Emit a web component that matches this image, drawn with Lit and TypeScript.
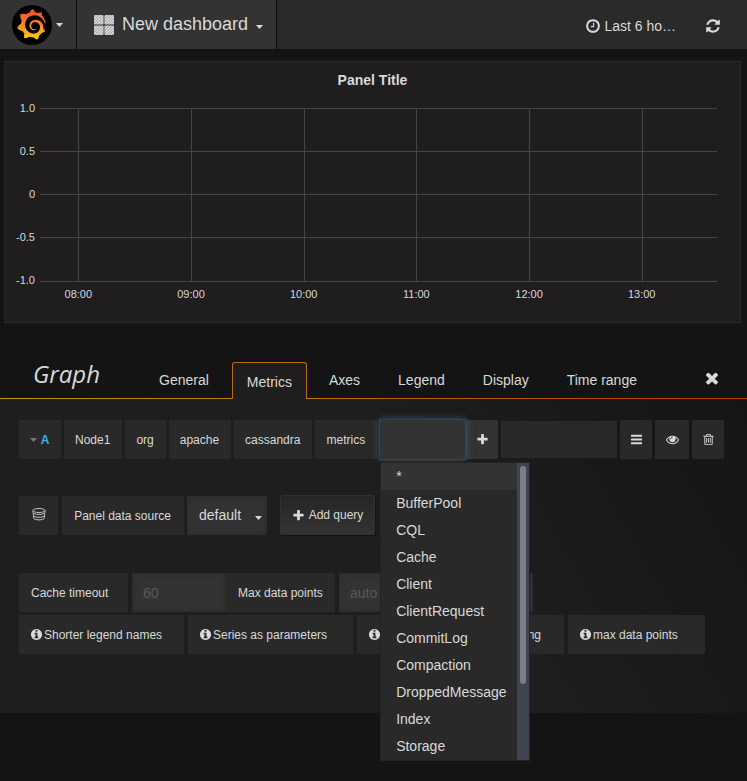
import { LitElement, html, css, svg } from "lit";
import { customElement, state } from "lit/decorators.js";
import { classMap } from "lit/directives/class-map.js";

const ICONS: Record<string, string> = {
  plus: "M1600 736v192q0 40-28 68t-68 28h-416v416q0 40-28 68t-68 28h-192q-40 0-68-28t-28-68v-416h-416q-40 0-68-28t-28-68v-192q0-40 28-68t68-28h416v-416q0-40 28-68t68-28h192q40 0 68 28t28 68v416h416q40 0 68 28t28 68z",
  bars: "M1664 1344v128q0 26-19 45t-45 19h-1408q-26 0-45-19t-19-45v-128q0-26 19-45t45-19h1408q26 0 45 19t19 45zm0-512v128q0 26-19 45t-45 19h-1408q-26 0-45-19t-19-45v-128q0-26 19-45t45-19h1408q26 0 45 19t19 45zm0-512v128q0 26-19 45t-45 19h-1408q-26 0-45-19t-19-45v-128q0-26 19-45t45-19h1408q26 0 45 19t19 45z",
  eye: "M1664 960q-152-236-381-353 61 104 61 225 0 185-131.5 316.5t-316.5 131.5-316.5-131.5-131.5-316.5q0-121 61-225-229 117-381 353 133 205 333.5 326.5t434.5 121.5 434.5-121.5 333.5-326.5zm-720-384q0-20-14-34t-34-14q-125 0-214.5 89.5t-89.5 214.5q0 20 14 34t34 14 34-14 14-34q0-86 61-147t147-61q20 0 34-14t14-34zm848 384q0 34-20 69-140 230-376.5 368.5t-499.5 138.5-499.5-139-376.5-368q-20-35-20-69t20-69q140-229 376.5-368t499.5-139 499.5 139 376.5 368q20 35 20 69z",
  trash: "M704 736v576q0 14-9 23t-23 9h-64q-14 0-23-9t-9-23v-576q0-14 9-23t23-9h64q14 0 23 9t9 23zm256 0v576q0 14-9 23t-23 9h-64q-14 0-23-9t-9-23v-576q0-14 9-23t23-9h64q14 0 23 9t9 23zm256 0v576q0 14-9 23t-23 9h-64q-14 0-23-9t-9-23v-576q0-14 9-23t23-9h64q14 0 23 9t9 23zm128 724v-948h-896v948q0 22 7 40.5t14.5 27 10.5 8.5h832q3 0 10.5-8.5t14.5-27 7-40.5zm-672-1076h448l-48-117q-7-9-17-11h-317q-10 2-17 11zm928 32v64q0 14-9 23t-23 9h-96v948q0 83-47 143.5t-113 60.5h-832q-66 0-113-58.5t-47-141.5v-952h-96q-14 0-23-9t-9-23v-64q0-14 9-23t23-9h309l70-167q15-37 54-63t79-26h320q40 0 79 26t54 63l70 167h309q14 0 23 9t9 23z",
  times: "M1490 1322q0 40-28 68l-136 136q-28 28-68 28t-68-28l-294-294-294 294q-28 28-68 28t-68-28l-136-136q-28-28-28-68t28-68l294-294-294-294q-28-28-28-68t28-68l136-136q28-28 68-28t68 28l294 294 294-294q28-28 68-28t68 28l136 136q28 28 28 68t-28 68l-294 294 294 294q28 28 28 68z",
  clock: "M1024 544v448q0 14-9 23t-23 9h-320q-14 0-23-9t-9-23v-64q0-14 9-23t23-9h224v-352q0-14 9-23t23-9h64q14 0 23 9t9 23zm416 352q0-148-73-273t-198-198-273-73-273 73-198 198-73 273 73 273 198 198 273 73 273-73 198-198 73-273zm224 0q0 209-103 385.5t-279.5 279.5-385.5 103-385.5-103-279.5-279.5-103-385.5 103-385.5 279.5-279.5 385.5-103 385.5 103 279.5 279.5 103 385.5z",
  refresh: "M1639 1056q0 5-1 7-64 268-268 434.5t-478 166.5q-146 0-282.5-55t-243.5-157l-129 129q-19 19-45 19t-45-19-19-45v-448q0-26 19-45t45-19h448q26 0 45 19t19 45-19 45l-137 137q71 66 161 102t187 36q134 0 250-65t186-179q11-17 53-117 8-23 30-23h192q13 0 22.5 9.5t9.5 22.5zm25-800v448q0 26-19 45t-45 19h-448q-26 0-45-19t-19-45 19-45l138-138q-148-137-349-137-134 0-250 65t-186 179q-11 17-53 117-8 23-30 23h-199q-13 0-22.5-9.5t-9.5-22.5v-7q65-268 270-434.5t480-166.5q146 0 284 55.5t245 156.5l130-129q19-19 45-19t45 19 19 45z",
  info: "M1152 1376v-160q0-14-9-23t-23-9h-96v-512q0-14-9-23t-23-9h-320q-14 0-23 9t-9 23v160q0 14 9 23t23 9h96v320h-96q-14 0-23 9t-9 23v160q0 14 9 23t23 9h448q14 0 23-9t9-23zm-128-896v-160q0-14-9-23t-23-9h-192q-14 0-23 9t-9 23v160q0 14 9 23t23 9h192q14 0 23-9t9-23zm640 416q0 209-103 385.5t-279.5 279.5-385.5 103-385.5-103-279.5-279.5-103-385.5 103-385.5 279.5-279.5 385.5-103 385.5 103 279.5 279.5 103 385.5z",
};

const icon = (name: string, size = 14) =>
  html`<svg class="icon" width=${size} height=${size} viewBox="0 0 1792 1792" aria-hidden="true"><path d=${ICONS[name]}></path></svg>`;

const caret = html`<svg class="icon caret" width="7" height="4" viewBox="0 0 7 4" aria-hidden="true"><path d="M0 0h7L3.500 4z"></path></svg>`;

const LOGO =
  "M23.02 10.59a8.578 8.578 0 0 0-.862-3.034 8.911 8.911 0 0 0-1.789-2.445c.337-1.342-.413-2.505-.413-2.505-1.292-.08-2.113.4-2.416.62-.052-.02-.102-.044-.154-.064-.22-.089-.446-.172-.677-.247-.231-.073-.47-.14-.711-.197a9.867 9.867 0 0 0-.875-.161C14.557.753 12.94 0 12.94 0c-1.804 1.145-2.147 2.744-2.147 2.744l-.018.093c-.098.029-.2.057-.298.088-.138.042-.275.094-.413.143-.138.055-.275.107-.41.166a8.869 8.869 0 0 0-1.557.87l-.063-.029c-2.497-.955-4.716.195-4.716.195-.203 2.658.996 4.33 1.235 4.636a11.608 11.608 0 0 0-.607 2.635C1.636 12.677.953 15.014.953 15.014c1.926 2.214 4.171 2.351 4.171 2.351.003-.002.006-.002.006-.005.285.509.615.994.986 1.446.156.19.32.371.488.548-.704 2.009.099 3.68.099 3.68 2.144.08 3.553-.937 3.849-1.173a9.784 9.784 0 0 0 3.164.501h.08l.055-.003.107-.002.103-.005.003.002c1.01 1.44 2.788 1.646 2.788 1.646 1.264-1.332 1.337-2.653 1.337-2.94v-.058c0-.02-.003-.039-.003-.06.265-.187.52-.387.758-.6a7.875 7.875 0 0 0 1.415-1.7c1.43.083 2.437-.885 2.437-.885-.236-1.49-1.085-2.216-1.264-2.354l-.018-.013-.016-.013a.217.217 0 0 1-.031-.02c.008-.092.016-.18.02-.27.011-.162.016-.323.016-.48v-.253l-.005-.098-.008-.135a1.891 1.891 0 0 0-.01-.13c-.003-.042-.008-.083-.013-.125l-.016-.124-.018-.122a6.215 6.215 0 0 0-2.032-3.73 6.015 6.015 0 0 0-3.222-1.46 6.292 6.292 0 0 0-.85-.048l-.107.002h-.063l-.044.003-.104.008a4.777 4.777 0 0 0-3.335 1.695c-.332.4-.592.84-.768 1.297a4.594 4.594 0 0 0-.312 1.817l.003.091c.005.055.007.11.013.164a3.615 3.615 0 0 0 .698 1.82 3.53 3.53 0 0 0 1.827 1.282c.33.098.66.14.971.137.039 0 .078 0 .114-.002l.063-.003c.02 0 .041-.003.062-.003.034-.002.065-.007.099-.01.007 0 .018-.003.028-.003l.031-.005.06-.008a1.18 1.18 0 0 0 .112-.02c.036-.008.072-.013.109-.024a2.634 2.634 0 0 0 .914-.415c.028-.02.056-.041.085-.065a.248.248 0 0 0 .039-.35.244.244 0 0 0-.309-.06l-.078.042c-.09.044-.184.083-.283.116a2.476 2.476 0 0 1-.475.096c-.028.003-.054.006-.083.006l-.083.002c-.026 0-.054 0-.08-.002l-.102-.006h-.012l-.024.006c-.016-.003-.031-.003-.044-.006-.031-.002-.06-.007-.091-.01a2.59 2.59 0 0 1-.724-.213 2.557 2.557 0 0 1-.667-.438 2.52 2.52 0 0 1-.805-1.475 2.306 2.306 0 0 1-.029-.444l.006-.122v-.023l.002-.031c.003-.021.003-.04.005-.06a3.163 3.163 0 0 1 1.352-2.29 3.12 3.12 0 0 1 .937-.43 2.946 2.946 0 0 1 .776-.101h.06l.07.002.045.003h.026l.07.005a4.041 4.041 0 0 1 1.635.49 3.94 3.94 0 0 1 1.602 1.662 3.77 3.77 0 0 1 .397 1.414l.005.076.003.075c.002.026.002.05.002.075 0 .024.003.052 0 .07v.065l-.002.073-.008.174a6.195 6.195 0 0 1-.08.639 5.1 5.1 0 0 1-.267.927 5.31 5.31 0 0 1-.624 1.13 5.052 5.052 0 0 1-3.237 2.014 4.82 4.82 0 0 1-.649.066l-.039.003h-.287a6.607 6.607 0 0 1-1.716-.265 6.776 6.776 0 0 1-3.4-2.274 6.75 6.75 0 0 1-.746-1.15 6.616 6.616 0 0 1-.714-2.596l-.005-.083-.002-.02v-.056l-.003-.073v-.096l-.003-.104v-.07l.003-.163c.008-.22.026-.45.054-.678a8.707 8.707 0 0 1 .28-1.355c.128-.444.286-.872.473-1.277a7.04 7.04 0 0 1 1.456-2.1 5.925 5.925 0 0 1 .953-.763c.169-.111.343-.213.524-.306.089-.05.182-.091.273-.135.047-.02.093-.042.138-.062a7.177 7.177 0 0 1 .714-.267l.145-.045c.049-.015.098-.026.148-.041.098-.029.197-.052.296-.076.049-.013.1-.02.15-.033l.15-.032.151-.028.076-.013.075-.01.153-.024c.057-.01.114-.013.171-.023l.169-.021c.036-.003.073-.008.106-.01l.073-.008.036-.003.042-.002c.057-.003.114-.008.171-.01l.086-.006h.023l.037-.003.145-.007a7.999 7.999 0 0 1 1.708.125 7.917 7.917 0 0 1 2.048.68 8.253 8.253 0 0 1 1.672 1.09l.09.077.089.078c.06.052.114.107.171.159.057.052.112.106.166.16.052.055.107.107.159.164a8.671 8.671 0 0 1 1.41 1.978c.012.026.028.052.04.078l.04.078.075.156c.023.051.05.1.07.153l.065.15a8.848 8.848 0 0 1 .45 1.34.19.19 0 0 0 .201.142.186.186 0 0 0 .172-.184c.01-.246.002-.532-.024-.856z";

const base = css`
  *, *::before, *::after { box-sizing: border-box; }
  button, input, select { font: inherit; color: inherit; border: 0; margin: 0; border-radius: 0; }
  button { background: none; padding: 0; cursor: pointer; }
  a { color: inherit; text-decoration: none; }
  .icon { display: block; flex: none; fill: currentColor; }
`;

@customElement("top-nav")
class TopNav extends LitElement {
  static styles = [base, css`
    :host { display: block; }
    .bar { display: flex; height: 49px; background: #2a2a2a; }
    .brand, .dash { display: flex; align-items: center; background: #333; border-right: 1px solid #0a0a0a; }
    .brand { padding: 0 14px 0 12px; gap: 4px; width: 77px; }
    .dash { padding: 0 13px 0 17px; gap: 8px; font-size: 18px; }
    .dash .caret { margin-top: 5px; }
    .spacer { flex: 1; }
    .time { display: flex; align-items: center; gap: 3px; margin-right: 29px; font-size: 14px; padding-top: 2px; }
    .refresh { padding-top: 2px; margin-right: 26px; }
  `];
  render() {
    return html`
      <nav class="bar">
        <button class="brand" aria-label="Main menu">
          <svg class="icon" width="40" height="40" viewBox="0 0 40 40" aria-hidden="true">
            <defs>
              <linearGradient id="sun" x1="0" y1="0" x2="0" y2="1">
                <stop offset="0.1" stop-color="#f0532b"></stop>
                <stop offset="0.55" stop-color="#f68a26"></stop>
                <stop offset="1" stop-color="#fcd010"></stop>
              </linearGradient>
            </defs>
            <circle cx="20" cy="20" r="20" fill="#000"></circle>
            <g transform="translate(4 4) scale(1.270)"><path fill="url(#sun)" d=${LOGO}></path></g>
          </svg>
          ${caret}
        </button>
        <button class="dash">
          <svg class="icon" width="20" height="20" viewBox="0 0 20 20" aria-hidden="true">
            <defs>
              <pattern id="hatch" width="2.121" height="2.121" patternUnits="userSpaceOnUse" patternTransform="rotate(45)">
                <rect width="2.121" height="2.121" fill="#8c8c8c"></rect>
                <rect width="1.250" height="2.121" fill="#eee"></rect>
              </pattern>
            </defs>
            ${[[0, 0], [10.4, 0], [0, 10.4], [10.4, 10.4]].map(([x, y]) => svg`<rect x=${x} y=${y} width="9.600" height="9.600" rx="1.200" fill="url(#hatch)"></rect>`)}
          </svg>
          <span>New dashboard</span>
          ${caret}
        </button>
        <span class="spacer"></span>
        <button class="time">${icon("clock", 16)}<span>Last 6 ho…</span></button>
        <button class="refresh" aria-label="Refresh">${icon("refresh", 16)}</button>
      </nav>
    `;
  }
}

@customElement("graph-panel")
class GraphPanel extends LitElement {
  private hours = ["08:00", "09:00", "10:00", "11:00", "12:00", "13:00"];
  private levels = ["1.0", "0.5", "0", "-0.5", "-1.0"];
  static styles = [base, css`
    :host { display: block; }
    .panel { background: #1f1d1e; border: 1px solid #292929; padding: 8px 23px 21px 0; }
    h2 { margin: 0 0 11px; padding-left: 23px; font-size: 14px; line-height: 20px; text-align: center; }
    .chart { display: grid; grid-template-columns: 30px 1fr; column-gap: 5px; font-size: 11px; line-height: 14px; }
    .levels { display: flex; flex-direction: column; justify-content: space-between; text-align: right; }
    .plot { padding: 7px 0 5px; }
    .grid { display: block; width: 100%; height: 174px; }
    .grid line { stroke: #474647; shape-rendering: crispEdges; }
    .hours { grid-column: 2; display: grid; grid-template-columns: repeat(6, 113fr) 19fr; margin-left: -18px; text-align: center; }
  `];
  render() {
    return html`
      <section class="panel">
        <h2>Panel Title</h2>
        <div class="chart">
          <div class="levels">${this.levels.map((l) => html`<span>${l}</span>`)}</div>
          <div class="plot">
            <svg class="grid" aria-hidden="true">
              ${this.hours.map((_, i) => {
                const x = `${((38.5 + i * 112.8) / 677) * 100}%`;
                return svg`<line x1=${x} x2=${x} y1="0" y2="100%"></line>`;
              })}
              ${this.levels.map((_, i) => {
                const y = Math.floor(i * 43.25) + 0.5;
                return svg`<line x1="0" x2="100%" y1=${y} y2=${y}></line>`;
              })}
            </svg>
          </div>
          <div class="hours">${this.hours.map((h) => html`<span>${h}</span>`)}</div>
        </div>
      </section>
    `;
  }
}

@customElement("metric-menu")
class MetricMenu extends LitElement {
  private options = ["*", "BufferPool", "CQL", "Cache", "Client", "ClientRequest", "CommitLog", "Compaction", "DroppedMessage", "Index", "Storage"];
  static styles = [base, css`
    :host { display: block; }
    .menu { display: flex; background: #292929; border: 1px solid #242424; font-size: 14px; line-height: 27px; }
    ul { list-style: none; margin: 0; padding: 0; flex: 1; }
    li { padding: 0 7px 0 15px; white-space: nowrap; }
    .active { background: #333; }
    .track { width: 12px; padding: 3px; background: #404350; }
    .thumb { height: 218px; border-radius: 3px; background: #7b7d88; }
  `];
  render() {
    return html`
      <div class="menu">
        <ul role="listbox" aria-label="Metric">
          ${this.options.map((o, i) => html`<li role="option" aria-selected=${i === 0} class=${classMap({ active: i === 0 })}>${o}</li>`)}
        </ul>
        <div class="track"><div class="thumb"></div></div>
      </div>
    `;
  }
}

@customElement("panel-editor")
class PanelEditor extends LitElement {
  @state() private tab = "Metrics";
  private tabs = ["General", "Metrics", "Axes", "Legend", "Display", "Time range"];
  private path = ["Node1", "org", "apache", "cassandra", "metrics"];
  static styles = [base, css`
    :host { display: block; }
    .head { display: flex; align-items: flex-end; height: 40px; padding: 0 26px 0 33px;
      background: linear-gradient(to right, #b99b05, #b83409) bottom / 100% 1px no-repeat; }
    h1 { margin: 0; width: 107px; align-self: flex-start; font: italic 400 24px/30px "Open Sans", sans-serif; }
    .tabs { display: flex; flex: 1; align-items: flex-end; font-size: 14px; }
    .tab { height: 37px; padding: 0 18px 2px; border: 1px solid transparent; border-bottom: 0; white-space: nowrap; }
    .tab.on { padding: 2px 14px 0; margin: 0 3px 0 4px; border-color: #b96a14; border-radius: 3px 3px 0 0; background: #1f1d1e; }
    .close { align-self: center; padding-bottom: 2px; }
    .body { padding: 21px 23px 59px 19px; background: linear-gradient(60deg, #1f1d1e 60%, #151515 100%); font-size: 12px; }
    .row { display: flex; gap: 3px; height: 39px; }
    .cell { display: flex; align-items: center; justify-content: center; padding: 0 12px 0 11px; background: #292929; white-space: nowrap; border-radius: 1px; }
    .letter { gap: 4px; color: #33b5e5; font-weight: bold; width: 42px; }
    .letter .caret { fill: #777; }
    .picker { position: relative; width: 85px; }
    .picker input { width: 100%; height: 100%; padding: 0 8px; background: #333; outline: 0;
      box-shadow: 0 0 1px 1px #2c4558, 0 0 8px rgba(82, 168, 236, 0.5); }
    .drop { position: absolute; top: 42px; left: 0; width: 150px; z-index: 2; }
    .add { width: 32px; background: #333; padding: 0; margin-left: -2px; }
    .rest { flex: 1; margin: 1px 0; padding: 0; }
    .tool { width: 32px; padding: 0; }
    .tool.wide { width: 34px; }
    .source { margin-top: 37px; }
    .disk { width: 39px; padding: 0 0 3px; margin-right: 1px; }
    .disk svg { fill: none; stroke: #c4c4c4; }
    .label { width: 122px; }
    .choice { display: flex; align-items: center; position: relative; }
    select { appearance: none; width: 80px; height: 39px; padding: 0 12px 2px; font-size: 14px; background: #333; box-shadow: inset 0 0 6px #292929; }
    .choice .caret { position: absolute; right: 5px; top: 20px; }
    .query { display: flex; align-items: center; justify-content: center; gap: 4px; width: 95px; height: 40px; margin: -1px 0 0 10px;
      border: 1px solid #303030; border-radius: 2px; background: linear-gradient(#262626, #333); box-shadow: 1px 1px 1px #141414; }
    .options { gap: 4px; margin-top: 38px; }
    .options .short { width: 109px; justify-content: flex-start; padding-left: 12px; }
    .options input { width: 94px; padding: 0 11px; font-size: 14px; background: #333; box-shadow: inset 0 0 6px #292929; }
    .options input + .short { margin-left: -4px; }
    .options .long { width: 194px; }
    input::placeholder { color: #5a5a5a; opacity: 1; }
    .tips { gap: 4px; margin-top: 3px; }
    .tip { justify-content: flex-start; gap: 1px; width: 165px; }
    .tip.small { width: 97px; }
    .tip.medium { width: 106px; }
    .tip.large { width: 137px; }
  `];
  private tip(text: string, size = "") {
    return html`<button class="cell tip ${size}">${icon("info", 13)}<span>${text}</span></button>`;
  }
  render() {
    return html`
      <header class="head">
        <h1>Graph</h1>
        <div class="tabs" role="tablist">
          ${this.tabs.map((t) => html`<button role="tab" aria-selected=${t === this.tab} class=${classMap({ tab: true, on: t === this.tab })} @click=${() => (this.tab = t)}>${t}</button>`)}
        </div>
        <button class="close" aria-label="Close">${icon("times", 18)}</button>
      </header>
      <div class="body">
        <div class="row">
          <button class="cell letter">${caret}<span>A</span></button>
          ${this.path.map((p) => html`<button class="cell">${p}</button>`)}
          <div class="picker">
            <input type="text" aria-label="Metric segment" />
            <metric-menu class="drop"></metric-menu>
          </div>
          <button class="cell add" aria-label="Add function">${icon("plus", 13)}</button>
          <span class="cell rest"></span>
          <button class="cell tool" aria-label="Query options">${icon("bars", 13)}</button>
          <button class="cell tool wide" aria-label="Toggle visibility">${icon("eye", 13)}</button>
          <button class="cell tool" aria-label="Remove query">${icon("trash", 13)}</button>
        </div>
        <div class="row source">
          <span class="cell disk">
            <svg class="icon" width="14" height="14" viewBox="0 0 14 14" aria-hidden="true">
              <ellipse cx="7" cy="3.500" rx="6" ry="2"></ellipse>
              <path d="M1 3.500v1.800c0 2.800 12 2.800 12 0V3.500M1.300 6.200v2c0 2.800 11.400 2.800 11.400 0v-2M1.600 9v1.800c0 2.800 10.800 2.800 10.800 0V9"></path>
            </svg>
          </span>
          <label class="cell label" for="source">Panel data source</label>
          <span class="choice"><select id="source"><option>default</option></select>${caret}</span>
          <button class="query">${icon("plus", 13)}<span>Add query</span></button>
        </div>
        <div class="row options">
          <label class="cell short" for="timeout">Cache timeout</label>
          <input id="timeout" type="text" placeholder="60" />
          <label class="cell short" for="points">Max data points</label>
          <input id="points" class="long" type="text" placeholder="auto" />
        </div>
        <div class="row tips">
          ${this.tip("Shorter legend names")} ${this.tip("Series as parameters")}
          ${this.tip("Stacking", "small")} ${this.tip("Templating", "medium")}
          ${this.tip("max data points", "large")}
        </div>
      </div>
    `;
  }
}

@customElement("app-root")
class AppRoot extends LitElement {
  static styles = css`
    :host { display: block; min-height: 100vh; background: #141414; color: #d8d9da; font-family: "Liberation Sans", Arial, sans-serif; }
    .graph { margin: 12px 6px 36px 4px; }
  `;
  render() {
    return html`
      <top-nav></top-nav>
      <graph-panel class="graph"></graph-panel>
      <panel-editor></panel-editor>
    `;
  }
}
